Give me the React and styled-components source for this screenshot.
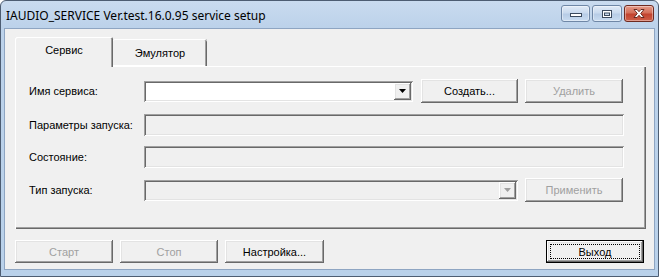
import React from "react";
import styled, { createGlobalStyle, css } from "styled-components";

const Global = createGlobalStyle`
  html, body { margin: 0; padding: 0; background: #fff; }
  body { width: 659px; height: 277px; overflow: hidden; }
  #root { width: 659px; height: 277px; }
  * { box-sizing: border-box; }
`;

const raised = css`
  box-shadow: inset -1px -1px #696969, inset 1px 1px #ffffff,
    inset -2px -2px #a0a0a0, inset 2px 2px #e3e3e3;
`;

const sunken = css`
  box-shadow: inset 1px 1px #a0a0a0, inset -1px -1px #ffffff,
    inset 2px 2px #696969, inset -2px -2px #e3e3e3;
`;

const Window = styled.div`
  width: 659px;
  height: 277px;
  display: flex;
  flex-direction: column;
  border: 1px solid #4d5d72;
  border-radius: 6px 6px 0 0;
  background: linear-gradient(#c9dbef, #bcd2ea 26px, #b9d1ea);
  padding: 0 3px 6px 3px;
  font-family: "Liberation Sans", Arial, sans-serif;
  font-size: 11px;
  color: #000;
`;

const TitleBar = styled.div`
  height: 27px;
  flex: none;
  display: flex;
  align-items: flex-start;
`;

const Title = styled.div`
  flex: 1;
  padding: 7px 0 0 2px;
  font-family: "Noto Sans", "Open Sans", sans-serif;
  font-size: 12px;
  line-height: 15px;
  color: #000;
  white-space: nowrap;
`;

const CaptionGroup = styled.div`
  display: flex;
  gap: 2px;
  margin-top: 4px;
  margin-right: 1px;
`;

const CaptionButton = styled.div`
  width: ${(p) => p.$w}px;
  height: 17px;
  border: 1px solid ${(p) => (p.$close ? "#6e2a20" : "#6f87a6")};
  border-radius: 3px;
  display: flex;
  align-items: center;
  justify-content: center;
  background: ${(p) =>
    p.$close
      ? "linear-gradient(#e59a88, #d4705a 45%, #c2432e 55%, #cf5f48)"
      : "linear-gradient(#e1ebf7, #c9daee 45%, #b7cce6 55%, #c9dcf1)"};
  box-shadow: inset 0 0 0 1px rgba(255, 255, 255, 0.4);
`;

const Client = styled.div`
  flex: 1;
  background: #f0f0f0;
  border: 1px solid #8ea5c2;
  display: flex;
  flex-direction: column;
  padding: 8px 8px 0 10px;
`;

const TabStrip = styled.div`
  display: flex;
  align-items: flex-end;
  height: 29px;
  position: relative;
  z-index: 1;
`;

const Tab = styled.div`
  width: ${(p) => p.$w}px;
  height: ${(p) => (p.$active ? 30 : 27)}px;
  margin-bottom: ${(p) => (p.$active ? -1 : 0)}px;
  background: #f0f0f0;
  display: flex;
  justify-content: center;
  padding-top: ${(p) => (p.$active ? 7 : 8)}px;
  line-height: 13px;
  border-radius: 2px 2px 0 0;
  box-shadow: ${(p) =>
    p.$active
      ? "inset 1px 1px #ffffff, inset -1px 0 #696969, inset -2px 0 #a0a0a0"
      : "inset 0 1px #ffffff, inset -1px 0 #696969, inset -2px 0 #a0a0a0, inset 0 -1px #ffffff"};
`;

const Panel = styled.div`
  width: 631px;
  height: 163px;
  flex: none;
  padding: 13px 0 0 14px;
  box-shadow: inset 1px 1px #ffffff, inset -1px -1px #696969,
    inset -2px -2px #a0a0a0;
`;

const Row = styled.div`
  display: flex;
  align-items: center;
  height: ${(p) => p.$h}px;
  margin-top: ${(p) => p.$mt || 0}px;
`;

const Label = styled.div`
  width: 115px;
  flex: none;
  white-space: nowrap;
`;

const Field = styled.div`
  width: ${(p) => p.$w}px;
  height: ${(p) => p.$h}px;
  flex: none;
  background: ${(p) => (p.$disabled ? "#f0f0f0" : "#ffffff")};
  ${sunken};
  display: flex;
  justify-content: flex-end;
  align-items: stretch;
  padding: 2px;
`;

const DropButton = styled.div`
  width: 17px;
  background: #f0f0f0;
  ${raised};
  display: flex;
  align-items: center;
  justify-content: center;
`;

const Button = styled.div`
  width: ${(p) => p.$w}px;
  height: ${(p) => p.$h || 23}px;
  flex: none;
  margin-left: ${(p) => p.$ml || 0}px;
  background: #f0f0f0;
  display: flex;
  align-items: center;
  justify-content: center;
  color: ${(p) => (p.$disabled ? "#a0a0a0" : "#000")};
  white-space: nowrap;
  position: relative;
  ${(p) =>
    p.$default
      ? css`
          box-shadow: inset 0 0 0 1px #000, inset -2px -2px #696969,
            inset 2px 2px #ffffff, inset -3px -3px #a0a0a0,
            inset 3px 3px #e3e3e3;
        `
      : raised};
`;

const FocusRect = styled.div`
  position: absolute;
  inset: 4px;
  border: 1px dotted #000;
`;

const BottomBar = styled.div`
  display: flex;
  align-items: center;
  margin-top: 11px;
  height: 23px;
  padding-right: 2px;
`;

const Spacer = styled.div`
  flex: 1;
`;

const Arrow = ({ color }) => (
  <svg width="7" height="4" viewBox="0 0 7 4">
    <path d="M0 0h7L3.5 4z" fill={color} />
  </svg>
);

export default function App() {
  return (
    <>
      <Global />
      <Window>
        <TitleBar>
          <Title>IAUDIO_SERVICE Ver.test.16.0.95 service setup</Title>
          <CaptionGroup>
            <CaptionButton $w={29}>
              <svg width="12" height="8" viewBox="0 0 12 8">
                <rect x="0.5" y="3.5" width="11" height="3" fill="#fff" stroke="#3b4a5e" />
              </svg>
            </CaptionButton>
            <CaptionButton $w={30}>
              <svg width="12" height="10" viewBox="0 0 12 10">
                <rect x="1.5" y="1.5" width="9" height="7" fill="#fff" stroke="#3b4a5e" />
                <rect x="3.5" y="4" width="5" height="2.5" fill="#c9daee" stroke="#3b4a5e" strokeWidth="1" />
              </svg>
            </CaptionButton>
            <CaptionButton $w={30} $close>
              <svg width="14" height="11" viewBox="0 0 14 11">
                <path
                  d="M2 1.5h3l2 2.2 2-2.2h3l-3.3 4 3.3 4h-3l-2-2.2-2 2.2h-3l3.3-4z"
                  fill="#fff"
                  stroke="#5a1f16"
                  strokeWidth="0.9"
                  strokeLinejoin="round"
                />
              </svg>
            </CaptionButton>
          </CaptionGroup>
        </TitleBar>
        <Client>
          <TabStrip>
            <Tab $active $w={98}>Сервис</Tab>
            <Tab $w={94}>Эмулятор</Tab>
          </TabStrip>
          <Panel>
            <Row $h={24}>
              <Label>Имя сервиса:</Label>
              <Field $w={269} $h={21}>
                <DropButton>
                  <Arrow color="#000" />
                </DropButton>
              </Field>
              <Button $w={97} $h={24} $ml={8}>Создать...</Button>
              <Button $w={98} $h={24} $ml={7} $disabled>Удалить</Button>
            </Row>
            <Row $h={22} $mt={11}>
              <Label>Параметры запуска:</Label>
              <Field $w={480} $h={22} $disabled />
            </Row>
            <Row $h={22} $mt={10}>
              <Label>Состояние:</Label>
              <Field $w={480} $h={22} $disabled />
            </Row>
            <Row $h={24} $mt={10}>
              <Label>Тип запуска:</Label>
              <Field $w={374} $h={21} $disabled>
                <DropButton>
                  <Arrow color="#a0a0a0" />
                </DropButton>
              </Field>
              <Button $w={98} $h={24} $ml={7} $disabled>Применить</Button>
            </Row>
          </Panel>
          <BottomBar>
            <Button $w={98} $disabled>Старт</Button>
            <Button $w={98} $ml={7} $disabled>Стоп</Button>
            <Button $w={99} $ml={7}>Настройка...</Button>
            <Spacer />
            <Button $w={98} $default>
              <FocusRect />
              Выход
            </Button>
          </BottomBar>
        </Client>
      </Window>
    </>
  );
}
